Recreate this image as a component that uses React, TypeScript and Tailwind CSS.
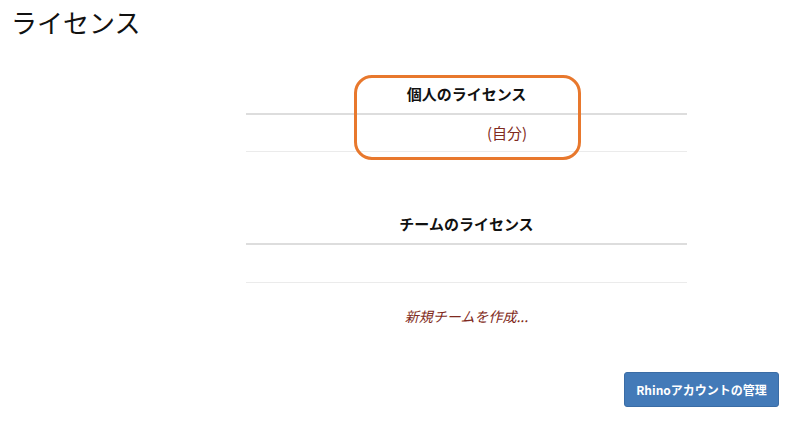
import React from 'react';

const jp = { fontFamily: '"Noto Sans CJK JP", "Noto Sans", sans-serif' };

export default function App() {
  return (
    <div className="relative w-[800px] h-[428px] bg-white text-[#222]" style={jp}>
      {/* Title */}
      <h1 className="pl-[11px] pt-[5px] text-[26px] leading-[34px] font-normal text-[#111]">ライセンス</h1>

      {/* Personal licenses */}
      <div className="ml-[246px] w-[441px] mt-[37px]">
        <div className="h-[39px] flex items-center justify-center border-b-2 border-[#dddddd] text-[15px] font-bold text-[#111]">
          個人のライセンス
        </div>
        <div className="h-[37px] flex items-center pl-[241px] border-b border-[#ebebeb] text-[15px] text-[#7f2a20]">
          (自分)
        </div>
      </div>

      {/* Team licenses */}
      <div className="ml-[246px] w-[441px] mt-[53px]">
        <div className="h-[40px] flex items-center justify-center border-b-2 border-[#dddddd] text-[15px] font-bold text-[#111]">
          チームのライセンス
        </div>
        <div className="h-[38px] border-b border-[#ebebeb]" />
        <div className="h-[66px] flex items-center justify-center text-[14px] italic text-[#7f2a20]">
          新規チームを作成...
        </div>
      </div>

      {/* Footer button */}
      <div className="flex justify-end pr-[21px] mt-[23px]">
        <button className="w-[155px] h-[35px] rounded-[3px] bg-[#437ab8] border border-[#3a6ca5] text-white text-[12px] font-bold">
          Rhinoアカウントの管理
        </button>
      </div>

      {/* Highlight annotation */}
      <div className="absolute left-[354px] top-[75px] w-[227px] h-[85px] border-[3px] border-[#e8782d] rounded-[18px]" />
    </div>
  );
}
